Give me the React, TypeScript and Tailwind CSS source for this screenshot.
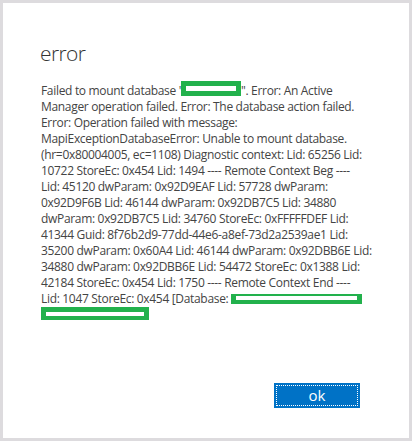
const lines: string[] = [
  "Manager operation failed. Error: The database action failed.",
  "Error: Operation failed with message:",
  "MapiExceptionDatabaseError: Unable to mount database.",
  "(hr=0x80004005, ec=1108) Diagnostic context: Lid: 65256 Lid:",
  "10722 StoreEc: 0x454 Lid: 1494 ---- Remote Context Beg ----",
  "Lid: 45120 dwParam: 0x92D9EAF Lid: 57728 dwParam:",
  "0x92D9F6B Lid: 46144 dwParam: 0x92DB7C5 Lid: 34880",
  "dwParam: 0x92DB7C5 Lid: 34760 StoreEc: 0xFFFFFDEF Lid:",
  "41344 Guid: 8f76b2d9-77dd-44e6-a8ef-73d2a2539ae1 Lid:",
  "35200 dwParam: 0x60A4 Lid: 46144 dwParam: 0x92DBB6E Lid:",
  "34880 dwParam: 0x92DBB6E Lid: 54472 StoreEc: 0x1388 Lid:",
  "42184 StoreEc: 0x454 Lid: 1750 ---- Remote Context End ----",
];

// green marker boxes hiding the database name
function Redacted({ className }: { className: string }) {
  return (
    <span className={`inline-block bg-[#22b14c] align-[-1px] ${className}`}>
      <span className="block h-full w-full bg-white" />
    </span>
  );
}

export default function App() {
  return (
    <div className="h-[445px] w-[414px] bg-white">
      <div className="flex h-[441px] w-[412px] flex-col border-[3px] border-[#dddbde] font-['Open_Sans','Noto_Sans',sans-serif]">
        <h1 className="mt-[40px] pl-[37px] text-[21px] font-light leading-[21px] tracking-[-0.6px] text-[#333]">
          error
        </h1>
        <div className="mt-[17px] pl-[38px] text-[12px] leading-[16px] tracking-[-0.32px] whitespace-nowrap text-[#444]">
          <div>
            Failed to mount database '
            <Redacted className="h-[15px] w-[60px] p-[5px]" />
            ". Error: An Active
          </div>
          {lines.map((l) => (
            <div key={l}>{l}</div>
          ))}
          <div>
            Lid: 1047 StoreEc: 0x454 [Database:{" "}
            <Redacted className="h-[10px] w-[131px] px-[5px] pt-[2px] pb-[4px]" />
          </div>
          <div>
            <Redacted className="h-[13px] w-[108px] px-[5px] pt-[5px] pb-[4px]" />
          </div>
        </div>
        <div className="mt-auto flex justify-end pr-[49px] pb-[30px]">
          <button className="h-[25px] w-[86px] bg-[#0072c6] p-[2px]">
            <span className="flex h-full w-full items-center justify-center border border-dotted border-white text-[15px] leading-none text-white">
              ok
            </span>
          </button>
        </div>
      </div>
    </div>
  );
}
